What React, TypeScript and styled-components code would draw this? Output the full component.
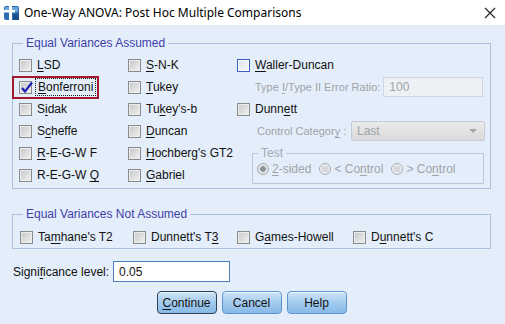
import React from "react";
import styled, { createGlobalStyle } from "styled-components";

const GlobalStyle = createGlobalStyle`
	html, body {
		margin: 0;
		padding: 0;
		background: #e4eefa;
	}
	body {
		font-family: "Liberation Sans", Arial, sans-serif;
		font-size: 12px;
		color: #111;
	}
`;

// Window chrome
const Window = styled.div`
	width: 505px;
	height: 324px;
	display: flex;
	flex-direction: column;
	background: #e4eefa;
	overflow: hidden;
`;
const TitleBar = styled.div`
	height: 25px;
	flex-shrink: 0;
	display: flex;
	align-items: center;
	gap: 4px;
	padding: 0 9px 0 3px;
	background: #fff;
`;
const TitleText = styled.div`
	flex: 1;
	font-family: "Noto Sans", "Open Sans", sans-serif;
	font-size: 12px;
	color: #000;
`;
const Body = styled.div`
	display: flex;
	flex-direction: column;
	padding: 11px 14px 0 12px;
`;

// Groups
const Group = styled.fieldset<{ $gap?: number }>`
	margin: ${(p) => p.$gap ?? 0}px 0 0 0;
	padding: 0 0 0 6px;
	border: 1px solid #a9c1dc;
	min-width: 0;
`;
const Legend = styled.legend<{ $muted?: boolean }>`
	margin-left: 4px;
	padding: 0 3px;
	color: ${(p) => (p.$muted ? "#a2a9b2" : "#3e3ea8")};
	font-size: 12px;
	line-height: 14px;
`;
const AssumedGrid = styled.div`
	display: grid;
	grid-template-columns: 109px 109px minmax(0, 1fr);
	padding: 4px 3px 2px 0;
`;
const Column = styled.div`
	display: flex;
	flex-direction: column;
	align-items: flex-start;
`;
const NotAssumedGrid = styled.div`
	display: grid;
	grid-template-columns: 113px 104px 116px 1fr;
	padding: 5px 6px 0 1px;
`;

// Rows
const Row = styled.div<{ $indent?: number }>`
	height: 22px;
	display: flex;
	align-items: center;
	gap: 5px;
	padding-left: ${(p) => p.$indent ?? 0}px;
	white-space: nowrap;
	box-sizing: border-box;
`;
const FieldRow = styled(Row)<{ $spread?: boolean }>`
	align-self: stretch;
	gap: 3px;
	justify-content: ${(p) => (p.$spread ? "space-between" : "flex-start")};
	padding-right: 2px;
`;
const Label = styled.span<{ $disabled?: boolean; $small?: boolean }>`
	color: ${(p) => (p.$disabled ? "#a0a3a8" : "#111")};
	font-size: ${(p) => (p.$small ? 11 : 12)}px;
	u {
		text-decoration-thickness: 1px;
		text-underline-offset: 2px;
	}
`;
const FocusLabel = styled(Label)`
	outline: 1px dotted #222;
	outline-offset: 1px;
	padding: 0 1px;
`;
const Highlight = styled.div`
	position: relative;
	&::after {
		content: "";
		position: absolute;
		top: 0;
		bottom: -1px;
		left: -7px;
		right: -5px;
		border: 2px solid #a3182c;
		pointer-events: none;
	}
`;

// Checkbox
const Box = styled.span<{ $focus?: boolean }>`
	position: relative;
	width: 13px;
	height: 13px;
	flex-shrink: 0;
	box-sizing: border-box;
	border: 1px solid ${(p) => (p.$focus ? "#3d5fc4" : "#8a8b8c")};
	background: ${(p) =>
		p.$focus ? "linear-gradient(135deg, #dfe4ec, #f7f8fb)" : "linear-gradient(135deg, #c4c5c6, #f3f3f3)"};
	box-shadow: inset 0 0 0 1px ${(p) => (p.$focus ? "#fff" : "#ececec")};
	svg {
		position: absolute;
		left: 0;
		top: -2px;
	}
`;
const Check = ({ checked, focus }: { checked?: boolean; focus?: boolean }) => (
	<Box $focus={focus}>
		{checked && (
			<svg width="14" height="14" viewBox="0 0 14 14">
				<path d="M2 8 L5 11.5 L12 2.5" fill="none" stroke="#1b22b4" strokeWidth="2.2" />
			</svg>
		)}
	</Box>
);

// Radio
const Radio = styled.span<{ $on?: boolean }>`
	width: 12px;
	height: 12px;
	box-sizing: border-box;
	flex-shrink: 0;
	border-radius: 50%;
	border: 1px solid #a8abb0;
	background: ${(p) =>
		p.$on
			? "radial-gradient(circle, #8d9096 0 2.5px, #d9dbde 3px, #eceef0 6px)"
			: "radial-gradient(circle, #d5d7da 0 3px, #eceef0 4px)"};
`;
const RadioRow = styled.div`
	display: flex;
	align-items: center;
	gap: 8px;
	padding: 2px 0 7px 3px;
`;
const RadioItem = styled.div`
	display: flex;
	align-items: center;
	gap: 3px;
`;
const TestGroup = styled(Group)`
	align-self: stretch;
	margin: 4px 3px 0 15px;
	padding: 0 0 0 1px;
	border-color: #b4c8de;
`;

// Fields
const Field = styled.div<{ $w: number; $disabled?: boolean }>`
	width: ${(p) => p.$w}px;
	height: 20px;
	flex-shrink: 0;
	box-sizing: border-box;
	display: flex;
	align-items: center;
	padding: 0 5px;
	border: 1px solid ${(p) => (p.$disabled ? "#cdd5de" : "#4d7fc0")};
	background: ${(p) => (p.$disabled ? "#eef1f4" : "#fff")};
	color: ${(p) => (p.$disabled ? "#a0a3a8" : "#111")};
`;
const Combo = styled.div`
	width: 134px;
	height: 20px;
	flex-shrink: 0;
	box-sizing: border-box;
	display: flex;
	align-items: center;
	justify-content: space-between;
	padding: 0 7px 0 5px;
	border: 1px solid #c8cbcf;
	border-radius: 2px;
	background: linear-gradient(#ebebeb, #d9dadb);
	color: #a0a3a8;
`;
const Arrow = styled.span`
	width: 0;
	height: 0;
	border-left: 4px solid transparent;
	border-right: 4px solid transparent;
	border-top: 4px solid #a4a6a9;
`;
const SigRow = styled.div`
	display: flex;
	align-items: center;
	gap: 4px;
	margin-top: 12px;
	padding-left: 1px;
	${Field} {
		height: 21px;
	}
`;
const Buttons = styled.div`
	display: flex;
	justify-content: center;
	gap: 5px;
	margin-top: 9px;
`;
const Button = styled.button<{ $default?: boolean }>`
	width: 60px;
	height: 23px;
	padding: 0;
	font-family: inherit;
	font-size: 12px;
	color: #111;
	border-radius: 4px;
	border: 1px solid ${(p) => (p.$default ? "#2c3f57" : "#5d94cf")};
	background: linear-gradient(#d0e5f8, #a3cbef 50%, #87b9e7);
	box-shadow: inset 0 1px 0 #eef6fd;
	u {
		text-underline-offset: 2px;
	}
`;

const AppIcon = () => (
	<svg width="17" height="17" viewBox="0 0 17 17">
		<rect x="1" y="2" width="15" height="14" rx="2" fill="#2a6fb3" />
		<rect x="2" y="3" width="13" height="5" rx="1" fill="#6ea6dc" />
		<rect x="6" y="1" width="3" height="15" fill="#fff" />
		<rect x="1" y="6" width="11" height="2.5" fill="#fff" />
		<rect x="10" y="10" width="6" height="6" fill="#1c4f8c" />
	</svg>
);
const CloseIcon = () => (
	<svg width="12" height="12" viewBox="0 0 12 12">
		<path d="M1 1 L11 11 M11 1 L1 11" stroke="#222" strokeWidth="1.1" />
	</svg>
);

const App = () => (
	<Window>
		<GlobalStyle />
		<TitleBar>
			<AppIcon />
			<TitleText>One-Way ANOVA: Post Hoc Multiple Comparisons</TitleText>
			<CloseIcon />
		</TitleBar>
		<Body>
			<Group>
				<Legend>Equal Variances Assumed</Legend>
				<AssumedGrid>
					<Column>
						<Row>
							<Check />
							<Label><u>L</u>SD</Label>
						</Row>
						<Highlight>
							<Row>
								<Check checked />
								<FocusLabel><u>B</u>onferroni</FocusLabel>
							</Row>
						</Highlight>
						<Row>
							<Check />
							<Label>S<u>i</u>dak</Label>
						</Row>
						<Row>
							<Check />
							<Label>S<u>c</u>heffe</Label>
						</Row>
						<Row>
							<Check />
							<Label><u>R</u>-E-G-W F</Label>
						</Row>
						<Row>
							<Check />
							<Label>R-E-G-W <u>Q</u></Label>
						</Row>
					</Column>
					<Column>
						<Row>
							<Check />
							<Label><u>S</u>-N-K</Label>
						</Row>
						<Row>
							<Check />
							<Label><u>T</u>ukey</Label>
						</Row>
						<Row>
							<Check />
							<Label>Tu<u>k</u>ey's-b</Label>
						</Row>
						<Row>
							<Check />
							<Label><u>D</u>uncan</Label>
						</Row>
						<Row>
							<Check />
							<Label><u>H</u>ochberg's GT2</Label>
						</Row>
						<Row>
							<Check />
							<Label><u>G</u>abriel</Label>
						</Row>
					</Column>
					<Column>
						<Row>
							<Check focus />
							<Label><u>W</u>aller-Duncan</Label>
						</Row>
						<FieldRow $indent={18}>
							<Label $disabled $small>Type <u>I</u>/Type II Error Ratio:</Label>
							<Field $w={100} $disabled>100</Field>
						</FieldRow>
						<Row>
							<Check />
							<Label>Dunn<u>e</u>tt</Label>
						</Row>
						<FieldRow $indent={20} $spread>
							<Label $disabled $small>Control Categor<u>y</u> :</Label>
							<Combo>
								Last
								<Arrow />
							</Combo>
						</FieldRow>
						<TestGroup>
							<Legend $muted>Test</Legend>
							<RadioRow>
								<RadioItem>
									<Radio $on />
									<Label $disabled><u>2</u>-sided</Label>
								</RadioItem>
								<RadioItem>
									<Radio />
									<Label $disabled>&lt; Co<u>n</u>trol</Label>
								</RadioItem>
								<RadioItem>
									<Radio />
									<Label $disabled>&gt; Co<u>n</u>trol</Label>
								</RadioItem>
							</RadioRow>
						</TestGroup>
					</Column>
				</AssumedGrid>
			</Group>
			<Group $gap={18}>
				<Legend>Equal Variances Not Assumed</Legend>
				<NotAssumedGrid>
					<Row>
						<Check />
						<Label>Ta<u>m</u>hane's T2</Label>
					</Row>
					<Row>
						<Check />
						<Label>Dunnett's T<u>3</u></Label>
					</Row>
					<Row>
						<Check />
						<Label>G<u>a</u>mes-Howell</Label>
					</Row>
					<Row>
						<Check />
						<Label>D<u>u</u>nnett's C</Label>
					</Row>
				</NotAssumedGrid>
			</Group>
			<SigRow>
				<Label>Signi<u>f</u>icance level:</Label>
				<Field $w={117}>0.05</Field>
			</SigRow>
			<Buttons>
				<Button $default>
					<u>C</u>ontinue
				</Button>
				<Button>Cancel</Button>
				<Button>Help</Button>
			</Buttons>
		</Body>
	</Window>
);

export default App;
